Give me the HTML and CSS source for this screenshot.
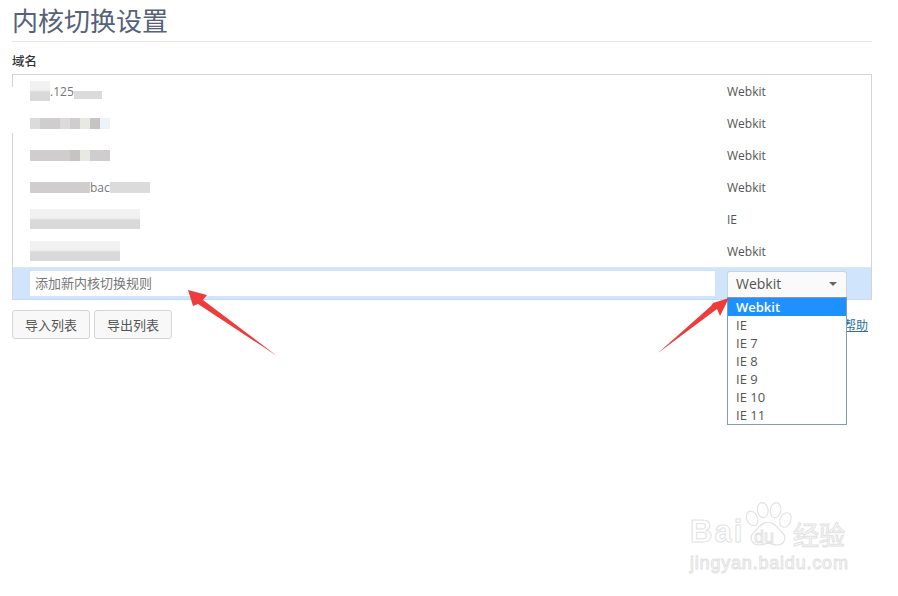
FILE: index.html
```html
<!DOCTYPE html>
<html lang="en">
<head>
    <meta charset="UTF-8">
    <meta name="viewport" content="width=device-width, initial-scale=1.0">
    <title>内核切换设置</title>
    <link rel="stylesheet" href="styles.css">
</head>
<body>

    <div class="page">
        <h1 class="title">内核切换设置</h1>
        <div class="label">域名</div>

        <!-- Rule list -->
        <div class="rules">
            <div class="smudge"></div>
            <div class="row">
                <div class="domain">
                    <span class="blur b-fade tall w20"></span><span class="plain">.125</span><span class="blur b-light low w28"></span>
                </div>
                <div class="kernel">Webkit</div>
            </div>
            <div class="row">
                <div class="domain">
                    <span class="blur b-light w10"></span><span class="blur b-mid w20"></span><span class="blur b-light w10"></span><span class="blur b-mid w10"></span><span class="blur b-pale w10"></span><span class="blur b-dark w10"></span><span class="blur b-blue w10"></span>
                </div>
                <div class="kernel">Webkit</div>
            </div>
            <div class="row">
                <div class="domain">
                    <span class="blur b-mid w40"></span><span class="blur b-dark w10"></span><span class="blur b-pale w10"></span><span class="blur b-mid w20"></span>
                </div>
                <div class="kernel">Webkit</div>
            </div>
            <div class="row">
                <div class="domain">
                    <span class="blur b-mid w60"></span><span class="plain">bac</span><span class="blur b-light w40"></span>
                </div>
                <div class="kernel">Webkit</div>
            </div>
            <div class="row">
                <div class="domain">
                    <span class="blur b-fade tall w110"></span>
                </div>
                <div class="kernel">IE</div>
            </div>
            <div class="row">
                <div class="domain">
                    <span class="blur b-fade tall w90"></span>
                </div>
                <div class="kernel">Webkit</div>
            </div>

            <!-- Add new rule -->
            <div class="add-row">
                <input class="add-input" type="text" placeholder="添加新内核切换规则">
                <div class="select">
                    <span>Webkit</span>
                    <span class="caret"></span>
                </div>
            </div>
        </div>

        <div class="actions">
            <div class="buttons">
                <button class="btn">导入列表</button>
                <button class="btn">导出列表</button>
            </div>
            <a href="#" class="help">帮助</a>
        </div>
    </div>

    <!-- Open dropdown -->
    <ul class="dropdown">
        <li class="active">Webkit</li>
        <li>IE</li>
        <li>IE 7</li>
        <li>IE 8</li>
        <li>IE 9</li>
        <li>IE 10</li>
        <li>IE 11</li>
    </ul>

    <!-- Red arrows drawn over the screenshot -->
    <svg class="arrows" width="898" height="596" viewBox="0 0 898 596">
        <polygon points="188,290 207,295 203,300 277,356 198,304 193,306" fill="#ee3b3b"/>
        <polygon points="729,298 720,316 717,309 658,353 711,306 713,303" fill="#ee3b3b"/>
    </svg>

    <!-- Watermark -->
    <div class="watermark">
        <div class="wm-line">
            <span class="wm-bai">Bai</span>
            <span class="wm-paw">
                <svg width="50" height="49" viewBox="0 0 66 60" fill="#fff" stroke="#e2e2e2" stroke-width="1.5">
                    <ellipse cx="12" cy="22" rx="7" ry="10" transform="rotate(-25 12 22)"/>
                    <ellipse cx="26" cy="11" rx="7" ry="10" transform="rotate(-8 26 11)"/>
                    <ellipse cx="43" cy="11" rx="7" ry="10" transform="rotate(8 43 11)"/>
                    <ellipse cx="56" cy="24" rx="7" ry="10" transform="rotate(25 56 24)"/>
                    <path d="M33 27c9 0 14 9 20 15 5 6 1 15-8 15-5 0-8-2-12-2s-7 2-12 2c-9 0-13-9-8-15 6-6 11-15 20-15z"/>
                </svg>
                <span class="wm-du">du</span>
            </span>
            <span class="wm-cn">经验</span>
        </div>
        <div class="wm-url">jingyan.baidu.com</div>
    </div>

</body>
</html>
```

FILE: styles.css
```css
/* General Styling */
body {
    font-family: "Open Sans", "Noto Sans CJK SC", sans-serif;
    margin: 0;
    padding: 0;
    background: #fff;
    color: #555;
    width: 898px;
    height: 596px;
    overflow: hidden;
    position: relative;
}

.page {
    width: 860px;
    margin-left: 12px;
}

.title {
    margin: 0;
    height: 41px;
    line-height: 39px;
    font-size: 26px;
    font-weight: 400;
    color: #56617a;
    border-bottom: 1px solid #e6e6e6;
    font-family: "Noto Sans CJK SC", sans-serif;
}

.label {
    margin-top: 10px;
    height: 22px;
    line-height: 18px;
    font-size: 12.5px;
    font-weight: 500;
    color: #333;
    font-family: "Noto Sans CJK SC", sans-serif;
}

/* Rule list */
.rules {
    position: relative;
    border: 1px solid #d4d4d4;
    border-bottom: none;
}

.smudge {
    position: absolute;
    left: -2px;
    top: 12px;
    width: 8px;
    height: 46px;
    background: #fff;
}

.row {
    display: flex;
    align-items: center;
    height: 32px;
    font-size: 12px;
}

.domain {
    display: flex;
    align-items: center;
    width: 714px;
    padding-left: 17px;
    box-sizing: border-box;
}

.kernel {
    color: #555;
}

.plain {
    color: #777;
    font-size: 12px;
}

.blur {
    display: block;
    height: 11px;
}

.blur.tall {
    height: 20px;
}

.blur.low {
    height: 8px;
    margin-top: 8px;
}

.b-dark { background: #c6c3c3; }
.b-mid { background: #cfcdcd; }
.b-light { background: #dcdbdb; }
.b-pale { background: #e9e9e4; }
.b-blue { background: #eef3fa; }
.b-fade { background: linear-gradient(#f1f1f1 45%, #d9d9d9 55%); }

.w10 { width: 10px; }
.w20 { width: 20px; }
.w28 { width: 28px; }
.w40 { width: 40px; }
.w60 { width: 60px; }
.w90 { width: 90px; }
.w110 { width: 110px; }

.add-row {
    display: flex;
    align-items: flex-start;
    height: 33px;
    box-sizing: border-box;
    padding: 3px 24px 0 17px;
    background: #d0e5fb;
    border-top: 1px solid #dbe7f2;
    border-bottom: 1px solid #c6dcee;
    gap: 12px;
}

.add-input {
    width: 685px;
    height: 25px;
    box-sizing: border-box;
    padding: 0 5px 2px;
    border: none;
    background: #fff;
    font-size: 13px;
    font-family: "Noto Sans CJK SC", sans-serif;
    outline: none;
}

.add-input::placeholder {
    color: #777;
    opacity: 1;
}

.select {
    display: flex;
    align-items: center;
    justify-content: space-between;
    width: 120px;
    height: 26px;
    box-sizing: border-box;
    padding: 0 9px 2px 8px;
    background: #fafafa;
    border: 1px solid #c9d6e2;
    border-bottom: none;
    border-radius: 3px 3px 0 0;
    font-size: 14px;
    color: #555;
}

.caret {
    width: 0;
    height: 0;
    border-left: 4px solid transparent;
    border-right: 4px solid transparent;
    border-top: 4px solid #666;
}

/* Buttons */
.actions {
    display: flex;
    justify-content: space-between;
    align-items: center;
    margin-top: 10px;
    padding-right: 4px;
}

.buttons {
    display: flex;
    gap: 4px;
}

.btn {
    width: 78px;
    height: 29px;
    padding: 0;
    background: #f8f8f8;
    border: 1px solid #d5d5d5;
    border-radius: 3px;
    font-size: 13px;
    color: #555;
    font-family: "Noto Sans CJK SC", sans-serif;
}

.help {
    font-size: 12px;
    color: #2a6f9e;
    font-family: "Noto Sans CJK SC", sans-serif;
}

/* Dropdown */
.dropdown {
    position: absolute;
    left: 727px;
    top: 297px;
    width: 120px;
    height: 128px;
    box-sizing: border-box;
    margin: 0;
    padding: 0;
    list-style: none;
    background: #fff;
    border: 1px solid #7f9db9;
    font-size: 13px;
    color: #555;
}

.dropdown li {
    height: 18px;
    line-height: 18px;
    padding-left: 8px;
}

.dropdown .active {
    background: #1e90ff;
    color: #fff;
    font-weight: 600;
}

.arrows {
    position: absolute;
    left: 0;
    top: 0;
    pointer-events: none;
}

/* Watermark */
.watermark {
    position: absolute;
    left: 690px;
    top: 500px;
    width: 165px;
    color: #fff;
    -webkit-text-stroke: 1px #e2e2e2;
}

.wm-line {
    display: flex;
    align-items: flex-end;
    height: 49px;
    font-family: "Liberation Sans", sans-serif;
}

.wm-bai {
    width: 53px;
    font-size: 31px;
    line-height: 34px;
    font-weight: 700;
    letter-spacing: 2px;
}

.wm-paw {
    position: relative;
    width: 50px;
    height: 49px;
}

.wm-paw svg {
    position: absolute;
    left: 0;
    top: 0;
}

.wm-du {
    position: absolute;
    left: 11px;
    top: 27px;
    font-size: 18px;
    line-height: 20px;
}

.wm-cn {
    font-size: 26px;
    line-height: 30px;
    font-family: "Noto Sans CJK SC", sans-serif;
    white-space: nowrap;
}

.wm-url {
    font-family: "Liberation Sans", sans-serif;
    font-size: 18px;
    line-height: 20px;
    margin-top: 4px;
    letter-spacing: 0.8px;
    white-space: nowrap;
}
```
